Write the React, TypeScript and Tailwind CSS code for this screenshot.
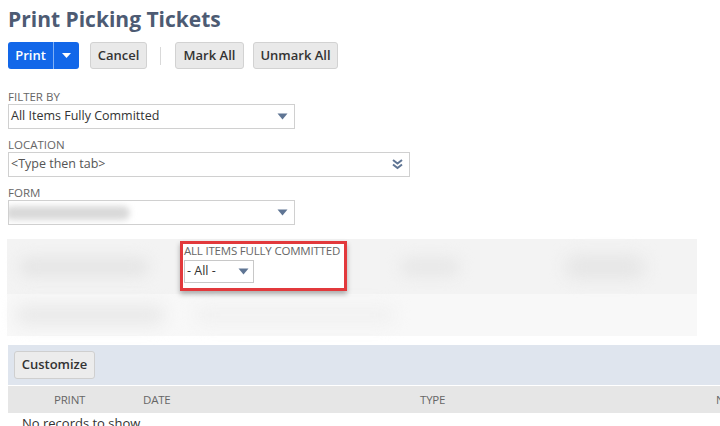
import React from "react";

function Caret({ className = "" }: { className?: string }) {
  return (
    <svg width="11" height="7" viewBox="0 0 11 7" className={className}>
      <path d="M0.5 0.5 L10.5 0.5 L5.5 6.5 Z" fill="#5f7594" />
    </svg>
  );
}

function DoubleChevron() {
  return (
    <svg width="11" height="11" viewBox="0 0 11 11">
      <path d="M1 1 L5.5 4.5 L10 1" stroke="#5f7594" strokeWidth="2" fill="none" />
      <path d="M1 5.5 L5.5 9 L10 5.5" stroke="#5f7594" strokeWidth="2" fill="none" />
    </svg>
  );
}

function GrayButton({ label, w }: { label: string; w: string }) {
  return (
    <button className={`h-[27px] ${w} rounded-[3px] border border-[#d2d2d2] bg-[#e9e9e9] text-[13px] font-semibold text-[#333]`}>
      {label}
    </button>
  );
}

export default function App() {
  return (
    <div className="w-[720px] h-[426px] overflow-hidden bg-white font-['Open_Sans',sans-serif] text-[#333]">
      {/* title */}
      <h1 className="pl-[8px] pt-[4px] h-[42px] text-[21px] font-bold leading-[30px] text-[#4d5b73]">
        Print Picking Tickets
      </h1>

      {/* buttons */}
      <div className="flex items-center pl-[8px] h-[27px]">
        <div className="flex h-[27px] rounded-[3px] bg-[#1267e9] text-white">
          <span className="w-[46px] flex items-center justify-center text-[13px] font-semibold border-r border-[#7fb0f5]">
            Print
          </span>
          <span className="w-[25px] flex items-center justify-center">
            <svg width="9" height="5" viewBox="0 0 9 5">
              <path d="M0 0 L9 0 L4.5 5 Z" fill="#fff" />
            </svg>
          </span>
        </div>
        <div className="ml-[11px]">
          <GrayButton label="Cancel" w="w-[57px]" />
        </div>
        <div className="ml-[13px] w-px h-[18px] bg-[#d9d9d9]" />
        <div className="ml-[14px]">
          <GrayButton label="Mark All" w="w-[69px]" />
        </div>
        <div className="ml-[9px]">
          <GrayButton label="Unmark All" w="w-[85px]" />
        </div>
      </div>

      {/* fields */}
      <div className="pl-[8px] pt-[21px]">
        <div className="text-[11.5px] leading-[14px] text-[#666] h-[15px]">FILTER BY</div>
        <div className="mt-[-1px] w-[287px] h-[25px] border border-[#d0d0d0] flex items-center justify-between pl-[2px] pr-[6px] text-[12.5px]">
          <span>All Items Fully Committed</span>
          <Caret />
        </div>

        <div className="mt-[9px] text-[11.5px] leading-[14px] text-[#666] h-[15px]">LOCATION</div>
        <div className="mt-[-1px] w-[402px] h-[25px] border border-[#d0d0d0] flex items-center justify-between pl-[2px] pr-[6px] text-[12.5px] text-[#555]">
          <span>&lt;Type then tab&gt;</span>
          <DoubleChevron />
        </div>

        <div className="mt-[9px] text-[11.5px] leading-[14px] text-[#666] h-[15px]">FORM</div>
        <div className="mt-[-1px] w-[287px] h-[25px] border border-[#d0d0d0] flex items-center justify-between pr-[6px] text-[12.5px] overflow-hidden">
          <div className="w-[125px] h-[14px] ml-[-4px] rounded-full bg-[#d9d9d9] blur-[3px]" />
          <Caret />
        </div>
      </div>

      {/* blurred filter area */}
      <div className="mt-[14px] ml-[7px] w-[690px] h-[97px] flex flex-col">
        <div className="h-[55px] bg-[#f3f3f3] flex items-start">
          <div className="w-[173px] h-full flex items-center">
            <div className="ml-[12px] w-[130px] h-[20px] rounded-full bg-[#e6e6e6] blur-[7px]" />
          </div>
          <div className="mt-[2px] w-[167px] h-[50px] border-[3px] border-[#e2393c] bg-white shadow-[0_3px_5px_rgba(0,0,0,0.3)] relative z-10 pl-[1px]">
            <div className="text-[11.5px] leading-[13px] text-[#666] tracking-[-0.2px] whitespace-nowrap">
              ALL ITEMS FULLY COMMITTED
            </div>
            <div className="mt-[3px] w-[70px] h-[23px] border border-[#c8c8c8] flex items-center justify-between pl-[2px] pr-[4px] text-[12.5px]">
              <span>- All -</span>
              <Caret />
            </div>
          </div>
          <div className="flex-1 h-full flex items-center justify-around">
            <div className="w-[60px] h-[20px] rounded-full bg-[#e8e8e8] blur-[7px]" />
            <div className="w-[80px] h-[24px] rounded-full bg-[#e6e6e6] blur-[8px]" />
          </div>
        </div>
        <div className="h-[42px] bg-[#f8f8f8] flex items-center">
          <div className="ml-[8px] w-[150px] h-[22px] rounded-full bg-[#eaeaea] blur-[8px]" />
          <div className="ml-[30px] w-[200px] h-[18px] rounded-full bg-[#f1f1f1] blur-[8px]" />
        </div>
      </div>

      {/* list */}
      <div className="mt-[9px] ml-[8px]">
        <div className="h-[40px] bg-[#dfe5ee] flex items-center pl-[6px]">
          <button className="h-[28px] w-[81px] rounded-[3px] border border-[#cfcfcf] bg-[#ececec] text-[13px] font-semibold text-[#333]">
            Customize
          </button>
        </div>
        <div className="mt-[1px] h-[27px] bg-[#e6e6e6] flex items-center text-[11.5px] text-[#666] tracking-[-0.2px]">
          <span className="ml-[46px] w-[89px]">PRINT</span>
          <span className="w-[277px]">DATE</span>
          <span className="flex-1">TYPE</span>
          <span className="w-[4px] overflow-hidden">N</span>
        </div>
        <div className="pl-[14px] pt-[2px] text-[13px] leading-[16px]">No records to show.</div>
      </div>
    </div>
  );
}
